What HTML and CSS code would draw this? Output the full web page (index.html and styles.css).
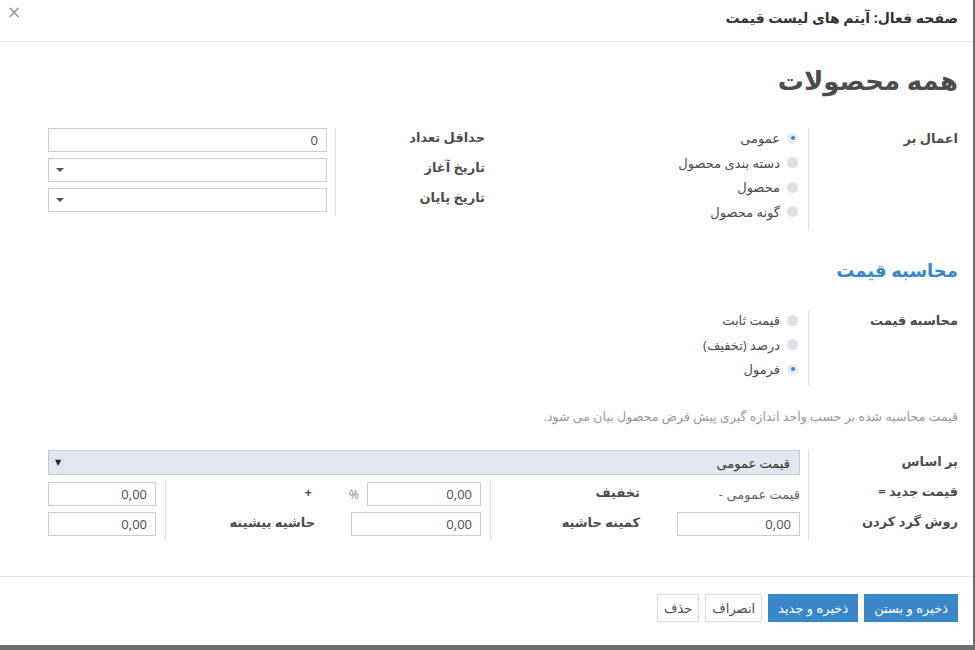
FILE: index.html
```html
<!DOCTYPE html>
<html lang="fa" dir="rtl">
<head>
    <meta charset="UTF-8">
    <title>آیتم های لیست قیمت</title>
    <link rel="stylesheet" href="styles.css">
</head>
<body>
    <div class="modal">
        <div class="modal-header">
            <h4 class="modal-title">صفحه فعال: آیتم های لیست قیمت</h4>
            <span class="close">×</span>
        </div>

        <div class="modal-body">
            <h1 class="sheet-title">همه محصولات</h1>

            <div class="top-groups">
                <div class="group group-right">
                    <div class="g-label">اعمال بر</div>
                    <div class="g-field radios">
                        <label class="radio"><span class="dot checked"></span>عمومی</label>
                        <label class="radio"><span class="dot"></span>دسته بندی محصول</label>
                        <label class="radio"><span class="dot"></span>محصول</label>
                        <label class="radio"><span class="dot"></span>گونه محصول</label>
                    </div>
                </div>
                <div class="group group-left">
                    <div class="g-label left-labels">
                        <div class="l-row">حداقل تعداد</div>
                        <div class="l-row">تاریخ آغاز</div>
                        <div class="l-row">تاریخ پایان</div>
                    </div>
                    <div class="g-field inputs">
                        <div class="field-input">0</div>
                        <div class="field-input date"><span class="caret"></span></div>
                        <div class="field-input date"><span class="caret"></span></div>
                    </div>
                </div>
            </div>

            <h2 class="section-title">محاسبه قیمت</h2>

            <div class="group group-price">
                <div class="g-label light">محاسبه قیمت</div>
                <div class="g-field radios">
                    <label class="radio"><span class="dot"></span>قیمت ثابت</label>
                    <label class="radio"><span class="dot"></span>درصد (تخفیف)</label>
                    <label class="radio"><span class="dot checked"></span>فرمول</label>
                </div>
            </div>

            <p class="help">قیمت محاسبه شده بر حسب واحد اندازه گیری پیش فرض محصول بیان می شود.</p>

            <div class="formula">
                <div class="f-label light">بر اساس</div>
                <div class="f-field">
                    <div class="select">
                        <span>قیمت عمومی</span>
                        <span class="select-arrow">▼</span>
                    </div>
                </div>

                <div class="f-label">قیمت جدید =</div>
                <div class="f-field inner">
                    <div class="col-a">
                        <div class="c-field muted">قیمت عمومی -</div>
                        <div class="c-label">تخفیف</div>
                    </div>
                    <div class="col-b">
                        <div class="c-field">
                            <div class="field-input num narrow">0,00</div>
                            <span class="pct">%</span>
                        </div>
                        <div class="c-label plus">+</div>
                    </div>
                    <div class="col-c">
                        <div class="field-input num">0,00</div>
                    </div>
                </div>

                <div class="f-label">روش گرد کردن</div>
                <div class="f-field inner">
                    <div class="col-a">
                        <div class="c-field">
                            <div class="field-input num round">0,00</div>
                        </div>
                        <div class="c-label">کمینه حاشیه</div>
                    </div>
                    <div class="col-b">
                        <div class="c-field">
                            <div class="field-input num wide">0,00</div>
                        </div>
                        <div class="c-label">حاشیه بیشینه</div>
                    </div>
                    <div class="col-c">
                        <div class="field-input num">0,00</div>
                    </div>
                </div>
            </div>
        </div>

        <div class="modal-footer">
            <button class="btn btn-primary">ذخیره و بستن</button>
            <button class="btn btn-primary">ذخیره و جدید</button>
            <button class="btn btn-default">انصراف</button>
            <button class="btn btn-default">حذف</button>
        </div>
    </div>
</body>
</html>
```

FILE: styles.css
```css
body {
    margin: 0;
    padding: 0;
    background-color: #6e6e6e;
    font-family: "Open Sans", "DejaVu Sans", sans-serif;
    font-size: 13px;
    color: #4c4c4c;
}

.modal {
    width: 973px;
    height: 645px;
    margin-right: auto;
    background-color: white;
    display: flex;
    flex-direction: column;
}

.modal-header {
    height: 41px;
    border-bottom: 1px solid #e5e5e5;
    display: flex;
    justify-content: space-between;
    align-items: flex-start;
    padding: 0 15px 0 7px;
}

.modal-title {
    margin: 8px 0 0;
    font-size: 14px;
    font-weight: 700;
    color: #333;
    line-height: 20px;
}

.close {
    margin-top: 2px;
    font-size: 17px;
    color: #999;
    font-family: "DejaVu Sans", sans-serif;
}

.modal-body {
    height: 534px;
    padding: 0 15px 0 48px;
    box-sizing: border-box;
}

.sheet-title {
    margin: 22px 0 32px;
    font-size: 26px;
    line-height: 32px;
    font-weight: 700;
    color: #4c4c4c;
}

.top-groups {
    display: grid;
    grid-template-columns: 465px 445px;
}

.group {
    display: grid;
    align-items: start;
}

.group-right,
.group-price {
    grid-template-columns: 150px 1fr;
}

.group-left {
    grid-template-columns: 158px 1fr;
}

.g-label {
    border-left: 1px solid #ddd;
    font-weight: 700;
    line-height: 20px;
    padding-top: 0;
    align-self: stretch;
}

.light {
    font-weight: 600;
}

.group-right .g-label {
    height: 102px;
}

.group-price .g-label {
    height: 76px;
}

.left-labels {
    padding-right: 8px;
    height: 88px;
}

.l-row {
    height: 30px;
    line-height: 18px;
}

.radios {
    padding-right: 10px;
    margin-top: -2px;
}

.radio {
    display: flex;
    align-items: center;
    gap: 7px;
    height: 24.5px;
    line-height: 20px;
}

.dot {
    width: 11px;
    height: 11px;
    border-radius: 50%;
    background-color: #dde1e7;
    display: inline-flex;
    align-items: center;
    justify-content: center;
}

.dot.checked {
    background-color: #e6ebf1;
}

.dot.checked::after {
    content: "";
    width: 4px;
    height: 4px;
    border-radius: 50%;
    background-color: #3a87c8;
}

.inputs {
    padding-right: 8px;
    display: flex;
    flex-direction: column;
    gap: 6px;
}

.field-input {
    height: 24px;
    box-sizing: border-box;
    border: 1px solid #ccc;
    padding: 0 8px;
    line-height: 22px;
    color: #4c4c4c;
    display: flex;
    align-items: center;
    justify-content: space-between;
}

.field-input.date {
    justify-content: flex-end;
}

.caret {
    width: 0;
    height: 0;
    border-left: 4px solid transparent;
    border-right: 4px solid transparent;
    border-top: 4px solid #555;
    margin-left: -1px;
}

.section-title {
    margin: 28px 0 28px;
    font-size: 18px;
    line-height: 24px;
    font-weight: 700;
    color: #3a87c8;
}

.help {
    margin: 22px 0 24px;
    line-height: 18px;
    color: #999;
    font-size: 12.6px;
}

.formula {
    display: grid;
    grid-template-columns: 150px 1fr;
    grid-auto-rows: 30px;
}

.f-label {
    border-left: 1px solid #ddd;
    font-weight: 700;
    line-height: 20px;
    padding-top: 1px;
}

.f-field {
    padding-right: 8px;
}

.select {
    height: 25px;
    box-sizing: border-box;
    background-color: #e1e7ee;
    border: 1px solid #c5ccd4;
    display: flex;
    justify-content: space-between;
    align-items: center;
    padding: 0 9px 0 6px;
    color: #333;
}

.select-arrow {
    font-size: 8px;
    color: #222;
    font-family: "DejaVu Sans", sans-serif;
}

.inner {
    display: grid;
    grid-template-columns: 310px 325px 117px;
    padding-top: 2px;
}

.col-a,
.col-b {
    display: grid;
    border-left: 1px solid #ddd;
    margin-top: -2px;
    padding-top: 2px;
}

.col-a {
    grid-template-columns: 150px 160px;
}

.col-b {
    grid-template-columns: 160px 165px;
}

.c-field {
    display: flex;
    align-items: center;
    gap: 8px;
    height: 24px;
}

.col-b .c-field {
    padding-right: 9px;
}

.muted {
    color: #666;
}

.c-label {
    font-weight: 700;
    padding-right: 10px;
    line-height: 20px;
}

.col-b .c-label {
    padding-right: 15px;
}

.plus {
    padding-right: 18px !important;
}

.pct {
    color: #888;
    font-size: 12px;
}

.col-c {
    padding-right: 9px;
}

.num {
    justify-content: flex-start;
}

.narrow {
    width: 114px;
}

.wide {
    width: 130px;
}

.round {
    width: 123px;
}

.modal-footer {
    flex: 1;
    border-top: 1px solid #e5e5e5;
    display: flex;
    gap: 6px;
    padding: 17px 15px 0;
    align-items: flex-start;
}

.btn {
    height: 28px;
    padding: 0 9px;
    font-family: inherit;
    font-size: 13px;
    cursor: pointer;
    border-radius: 0;
}

.btn-primary {
    background-color: #3a87c8;
    color: white;
    border: 1px solid #3a87c8;
    font-weight: 400;
}

.btn-default {
    background-color: white;
    color: #4c4c4c;
    border: 1px solid #ddd;
    padding: 0 6px;
}
```
